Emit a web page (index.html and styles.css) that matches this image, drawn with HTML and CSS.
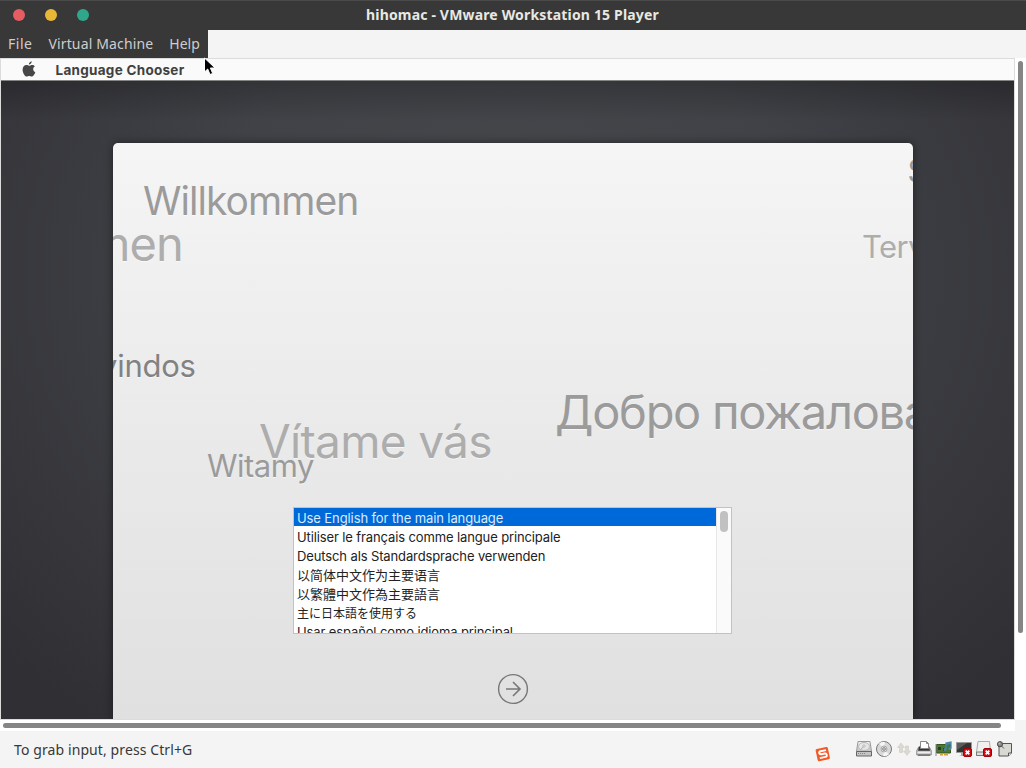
FILE: index.html
```html
<!DOCTYPE html>
<html lang="en">
<head>
<meta charset="utf-8">
<title>hihomac - VMware Workstation 15 Player</title>
<link rel="stylesheet" href="styles.css">
</head>
<body>
<div class="window">
  <header class="titlebar">
    <div class="controls"><i class="dot close"></i><i class="dot minimize"></i><i class="dot maximize"></i></div>
    <h1 class="title">hihomac - VMware Workstation 15 Player</h1>
  </header>
  <nav class="menubar">
    <div class="menus"><span class="m-file">File</span><span class="m-vm">Virtual Machine</span><span class="m-help">Help</span></div>
  </nav>
  <svg class="cursor" width="14" height="20" viewBox="0 0 14 20"><path d="M1.500 1v14l3.200-3 2.300 5.500 2.700-1.100-2.300-5.400H12z" fill="#000" stroke="#fff" stroke-width="1"/></svg>
  <div class="workspace">
    <main class="guest">
      <div class="mac-bar">
        <svg class="apple" width="14" height="16" viewBox="0 0 14 16"><path fill="#474747" d="M9.700 0.300C9.800 1.900 8.500 3.500 6.900 3.600 6.700 2 8.100 0.500 9.700 0.300zM12.800 5.400C11.700 6.100 11.100 7 11.200 8.300c0 1.400.9 2.500 2.100 2.900-.6 1.800-2 4.400-3.600 4.400-1 0-1.500-.6-2.500-.6s-1.600.6-2.500.6C2.800 15.600.6 11.900.6 8.800c0-2.900 1.800-4.700 3.800-4.700 1.100 0 2 .7 2.700.7.600 0 1.800-.8 3.100-.8 1.100 0 2 .5 2.600 1.400z"/></svg>
        <span class="app-name">Language Chooser</span>
      </div>
      <div class="desktop">
        <section class="panel">
          <div class="greetings">
            <span class="greet g1">Willkommen</span>
            <span class="greet g2">men</span>
            <span class="greet g3">vindos</span>
            <span class="greet g4">Vítame vás</span>
            <span class="greet g5">Witamy</span>
            <span class="greet g6">Добро пожаловать</span>
            <span class="greet g7">Terv</span>
            <span class="greet g8">S</span>
          </div>
          <div class="chooser">
            <ul class="languages">
              <li class="selected">Use English for the main language</li>
              <li>Utiliser le français comme langue principale</li>
              <li>Deutsch als Standardsprache verwenden</li>
              <li class="sc" lang="zh-Hans">以简体中文作为主要语言</li>
              <li class="tc" lang="zh-Hant">以繁體中文作為主要語言</li>
              <li class="jp" lang="ja">主に日本語を使用する</li>
              <li>Usar español como idioma principal</li>
            </ul>
            <div class="list-scroll"><i></i></div>
          </div>
          <svg class="next" width="32" height="32" viewBox="0 0 32 32" fill="none" stroke="#777"><circle cx="16" cy="16" r="14.400" stroke-width="1.400"/><path d="M9 16h14M16 9l7 7-7 7" stroke-width="1.600"/></svg>
        </section>
      </div>
    </main>
    <div class="vscroll"><i></i></div>
    <div class="hscroll"><i></i></div>
  </div>
  <footer class="status">
    <span class="hint">To grab input, press Ctrl+G</span>
    <svg class="sogou" width="16" height="16" viewBox="0 0 16 16"><g transform="rotate(-12 8 8)"><rect x="1.500" y="1.800" width="12.500" height="12.500" rx="1.500" fill="#f15a2b"/><path d="M11.800 4.800H6.200Q4.500 4.800 4.500 6.300T6.200 7.900H9.800Q11.500 7.900 11.500 9.600T9.800 11.400H4" fill="none" stroke="#fff" stroke-width="1.900"/></g></svg>
    <div class="devices">
      <svg width="18" height="18" viewBox="0 0 18 18"><defs><linearGradient id="metal" x2="0" y2="1"><stop stop-color="#f2f2f2"/><stop offset="1" stop-color="#c4c4c4"/></linearGradient></defs><path d="M3 1.500h12l1.500 10H1.500z" fill="url(#metal)" stroke="#999"/><ellipse cx="9" cy="6.500" rx="5.500" ry="4" fill="#e6e6e6" stroke="#bbb"/><circle cx="9" cy="6" r="1.200" fill="#eee" stroke="#aaa" stroke-width=".7"/><path d="M8.500 7L5.500 9.500" stroke="#aaa"/><path d="M1.500 11.500h15v4.500h-15z" fill="#c4c4c4" stroke="#666"/><path d="M3 13.500h8" stroke="#888" stroke-dasharray="1 1"/></svg>
      <svg width="18" height="18" viewBox="0 0 18 18"><circle cx="9" cy="9" r="7.500" fill="#d8d8d8" stroke="#777"/><path d="M9 9L4 3.500Q7 1 10 2zM9 9l5 5.500q-3 2.500-6 1.500z" fill="#f4f4f4"/><circle cx="9" cy="9" r="3" fill="#ddd" stroke="#aaa"/><circle cx="9" cy="9" r="1.300" fill="#fff" stroke="#777"/></svg>
      <svg width="18" height="18" viewBox="0 0 18 18" fill="#ddd9d0" stroke="#cbc7bf" stroke-width=".5"><path d="M6 3l3.500 4.500h-2v5h-3v-5h-2zM12 15.500L8.500 11h2V6h3v5h2z"/></svg>
      <svg width="18" height="18" viewBox="0 0 18 18"><path d="M4 6.500L1.800 10.500V15h14.400v-4.500L14 6.500z" fill="#c4c4c4" stroke="#888"/><path d="M4 7h10l1 3.800H3z" fill="#333"/><path d="M5.500 1.500h6l2 2v5h-8z" fill="#fff" stroke="#888"/><path d="M11.500 1.500v2h2" fill="none" stroke="#888"/><path d="M2.500 11.800h13v1.400h-13z" fill="#eee"/><path d="M3 14.500h12v1.300H3z" fill="#666"/></svg>
      <svg width="18" height="18" viewBox="0 0 18 18"><path d="M1.500 4.500h14v8.500h-14z" fill="#4c7733" stroke="#36551f"/><path d="M3 7h3v3H3zM8 8h3v3H8z" fill="#253d1b"/><path d="M5 13.500h3v2H5zM9 13.500h4v2H9z" fill="#caa43b"/><path d="M1 4v12" stroke="#888"/><path d="M11 9V3l5-1v6M11 4.500l5-1" fill="none" stroke="#4888a8" stroke-width="1.300"/><circle cx="10" cy="9.500" r="1.500" fill="#4888a8"/><circle cx="15" cy="8.500" r="1.500" fill="#4888a8"/></svg>
      <svg width="18" height="18" viewBox="0 0 18 18"><path d="M1.500 2.500h15v10h-15z" fill="#333" stroke="#999"/><path d="M2 3h10L2 10z" fill="#5a5a5a"/><path d="M6 13v2.500H4.500V16H11v-3z" fill="#aaa"/><rect x="8.500" y="8.500" width="8" height="8" rx="1.500" fill="#d00b14" stroke="#a60008"/><path d="M10.700 10.700l3.600 3.600m0-3.600l-3.600 3.600" stroke="#fff" stroke-width="1.900"/></svg>
      <svg width="18" height="18" viewBox="0 0 18 18"><path d="M3 1.500h11.500l1 10.500v3.500H1.500V12z" fill="#f0f0f0" stroke="#aaa"/><path d="M1.500 12h14v3.500h-14z" fill="#ddd" stroke="#777"/><rect x="8.500" y="8.500" width="8" height="8" rx="1.500" fill="#d00b14" stroke="#a60008"/><path d="M10.700 10.700l3.600 3.600m0-3.600l-3.600 3.600" stroke="#fff" stroke-width="1.900"/></svg>
      <svg class="note" width="18" height="18" viewBox="0 0 18 18"><path d="M3 3.500h12.500v9.500L12.500 16H3z" fill="#d6dad2" stroke="#555"/><path d="M12.500 16v-3h3" fill="#f0f0ed" stroke="#555"/><path d="M5.500 6L8 8.500" stroke="#555"/><circle cx="4" cy="4.200" r="2.600" fill="#888" stroke="#4c4c4c"/><circle cx="3.400" cy="3.500" r="1" fill="#bbb"/></svg>
    </div>
  </footer>
</div>
</body>
</html>
```
FILE: styles.css
```css
* { box-sizing: border-box; }
body { margin: 0; font-family: "Noto Sans", sans-serif; }
svg { display: block; flex: none; }
.window { position: relative; width: 1026px; height: 768px; overflow: hidden; display: flex; flex-direction: column; background: #f4f4f4; }

.titlebar { height: 30px; background: #383838; border-top: 1px solid #4b4b4b; display: grid; grid-template-columns: 200px 1fr 201px; align-items: start; }
.controls { display: flex; gap: 20px; padding: 8px 0 0 13px; }
.dot { width: 12px; height: 12px; border-radius: 50%; }
.close { background: #e55c63; }
.minimize { background: #e9b736; }
.maximize { background: #30a78b; }
.title { margin: 0; text-align: center; color: #e8e8e3; font: bold 14px/27px "Noto Sans", sans-serif; letter-spacing: 0.17px; white-space: nowrap; }

.menubar { height: 28px; }
.menus { width: 208px; height: 28px; background: #383838; color: #cecece; display: flex; gap: 16px; padding-left: 8px; font-size: 14px; line-height: 27px; white-space: nowrap; }
.m-file { letter-spacing: 0.5px; }
.m-vm { letter-spacing: 0.15px; }
.cursor { position: absolute; left: 203px; top: 57px; z-index: 5; }

.workspace { height: 673px; display: grid; grid-template: 662px 11px / 1015px 11px; }
.guest { border: 1px solid #dcdcdc; display: flex; flex-direction: column; overflow: hidden; }
.mac-bar { height: 22px; flex: none; background: #fafafa; border-bottom: 1px solid #858585; display: flex; align-items: flex-start; padding-left: 20.500px; }
.apple { margin-top: 2px; }
.app-name { margin-left: 20px; font: bold 13.500px/23px Inter, sans-serif; letter-spacing: 0.28px; color: #404040; white-space: nowrap; }
.desktop { height: 638px; padding: 62px 0 0 112px; background: linear-gradient(#0003, #0000 40px), radial-gradient(ellipse 690px 560px at 50% 30%, #47494d 0%, #404247 45%, #36363b 78%, #302f34 100%); }
.panel { width: 800px; height: 577px; border-radius: 5px 5px 0 0; background: linear-gradient(#f5f5f5, #eaeaea 50%, #e0e0e0); box-shadow: 0 0 8px #0007; display: flex; flex-direction: column; align-items: center; }

.greetings { position: relative; width: 800px; height: 364px; overflow: hidden; flex: none; }
.greet { position: absolute; font-family: Inter, sans-serif; font-weight: 400; line-height: 1; white-space: nowrap; text-shadow: 0 1px 0 #fff9; }
.g1 { left: 30px; top: 38px; font-size: 39px; letter-spacing: -0.95px; color: #9b9b9b; }
.g2 { right: 730px; top: 77px; font-size: 47px; letter-spacing: -0.9px; color: #adadad; }
.g3 { right: 717.500px; top: 207px; font-size: 31px; letter-spacing: -0.3px; color: #828282; }
.g4 { left: 146px; top: 275px; font-size: 46px; letter-spacing: -0.7px; color: #adadad; }
.g5 { left: 94px; top: 307px; font-size: 31px; letter-spacing: -0.5px; color: #9b9b9b; }
.g6 { left: 442px; top: 245px; font-size: 47px; letter-spacing: -1.3px; color: #9b9b9b; }
.g7 { left: 749px; top: 88px; font-size: 31px; letter-spacing: -0.6px; color: #adadad; }
.g8 { left: 794.500px; top: 12px; font-size: 31px; color: #999; }

.chooser { width: 439px; height: 127px; flex: none; margin-left: -1px; border: 1px solid #c2c2c2; background: #fff; display: flex; overflow: hidden; }
.languages { width: 422px; margin: 0; padding: 0; list-style: none; font: 13px/20px Inter, sans-serif; letter-spacing: -0.12px; color: #222; }
.languages li { height: 19px; padding-left: 3px; white-space: nowrap; }
.languages li.selected { height: 18px; margin-bottom: 1px; background: #0069d9; color: #dceafa; letter-spacing: -0.1px; }
.languages .sc { font-family: Inter, "Noto Sans CJK SC", sans-serif; letter-spacing: 0; }
.languages .tc { font-family: Inter, "Noto Sans CJK TC", sans-serif; letter-spacing: 0; }
.languages .jp { font-family: Inter, "Noto Sans CJK JP", sans-serif; font-size: 12px; line-height: 22px; letter-spacing: 0; }
.list-scroll { width: 15px; border-left: 1px solid #e6e6e6; background: #fafafa; padding: 3px 0 0 3px; }
.list-scroll i { display: block; width: 8px; height: 21px; border-radius: 4px; background: #c1c1c1; }
.next { margin-top: 39px; }

.vscroll { background: #fff; padding: 3px 0 0 3px; }
.vscroll i { display: block; width: 5px; height: 572px; border-radius: 3px; background: #858585; }
.hscroll { background: #fff; padding: 3px 0 0 3px; }
.hscroll i { display: block; width: 998px; height: 5px; border-radius: 3px; background: #858585; }

.status { height: 37px; display: flex; align-items: center; font-size: 14px; color: #383838; padding-left: 14px; }
.hint { width: 801px; line-height: 37px; letter-spacing: 0.1px; white-space: nowrap; }
.sogou { margin-top: 9px; }
.devices { display: flex; gap: 2px; margin: -2px 0 0 24px; }
.note { margin-left: 1px; }
```
